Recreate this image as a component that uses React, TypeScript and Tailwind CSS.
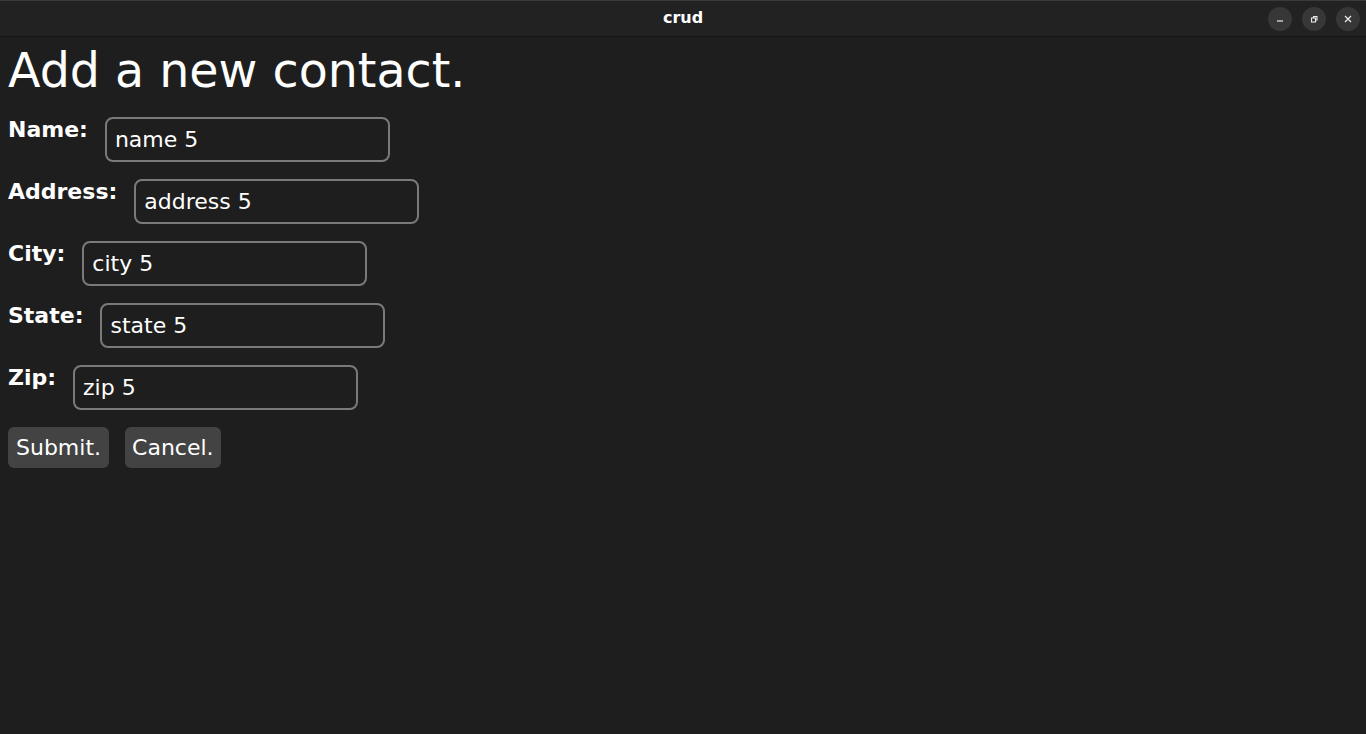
const fields = [
    { label: "Name:", value: "name 5" },
    { label: "Address:", value: "address 5" },
    { label: "City:", value: "city 5" },
    { label: "State:", value: "state 5" },
    { label: "Zip:", value: "zip 5" },
];

const TitleBar = () => {
    return (
        <div className="h-[37px] bg-[#222222] border-t border-[#3a3a3a] border-b border-b-[#161616] flex items-center relative shrink-0">
            <div className="flex-1 text-center text-white font-bold text-[16px] font-['DejaVu_Sans',sans-serif] -mt-[1px]">crud</div>
            <div className="absolute right-[6px] top-[6px] flex gap-[10px]">
                <button className="w-[24px] h-[24px] rounded-full bg-[#373737] flex items-center justify-center">
                    <svg width="10" height="10" viewBox="0 0 10 10"><path d="M2 7h6" stroke="#e8e8e8" strokeWidth="1.2" /></svg>
                </button>
                <button className="w-[24px] h-[24px] rounded-full bg-[#373737] flex items-center justify-center">
                    <svg width="10" height="10" viewBox="0 0 10 10" fill="none" stroke="#e8e8e8" strokeWidth="1.1">
                        <rect x="2.5" y="4" width="4" height="4" />
                        <path d="M4.5 4V2.5h3.5V6H6.5" />
                    </svg>
                </button>
                <button className="w-[24px] h-[24px] rounded-full bg-[#373737] flex items-center justify-center">
                    <svg width="10" height="10" viewBox="0 0 10 10"><path d="M2 2l6 6M8 2l-6 6" stroke="#e8e8e8" strokeWidth="1.3" /></svg>
                </button>
            </div>
        </div>
    );
};

const App = () => {
    return (
        <div className="w-[1366px] h-[734px] bg-[#1e1e1e] flex flex-col overflow-hidden font-['DejaVu_Sans',sans-serif] text-white">
            <TitleBar />
            <div className="px-[8px]">
                <h1 className="text-[47.5px] leading-[56px] mt-[6px] mb-[18px]">Add a new contact.</h1>
                <form className="flex flex-col gap-[17px]">
                    {fields.map((f) => (
                        <div key={f.label} className="flex items-start gap-[17px]">
                            <label className="font-bold text-[22px] leading-[22px] mt-[2px]">{f.label}</label>
                            <input
                                defaultValue={f.value}
                                className="w-[285px] h-[45px] border-2 border-[#7a7a7a] rounded-[8px] bg-[#1e1e1e] px-[8px] text-[22px] text-white outline-none"
                            />
                        </div>
                    ))}
                    <div className="flex gap-[16px]">
                        <button type="button" className="h-[41px] px-[8px] rounded-[6px] bg-[#434343] text-[22px] text-white">Submit.</button>
                        <button type="button" className="h-[41px] px-[7px] rounded-[6px] bg-[#434343] text-[22px] text-white">Cancel.</button>
                    </div>
                </form>
            </div>
        </div>
    );
};

export default App;
